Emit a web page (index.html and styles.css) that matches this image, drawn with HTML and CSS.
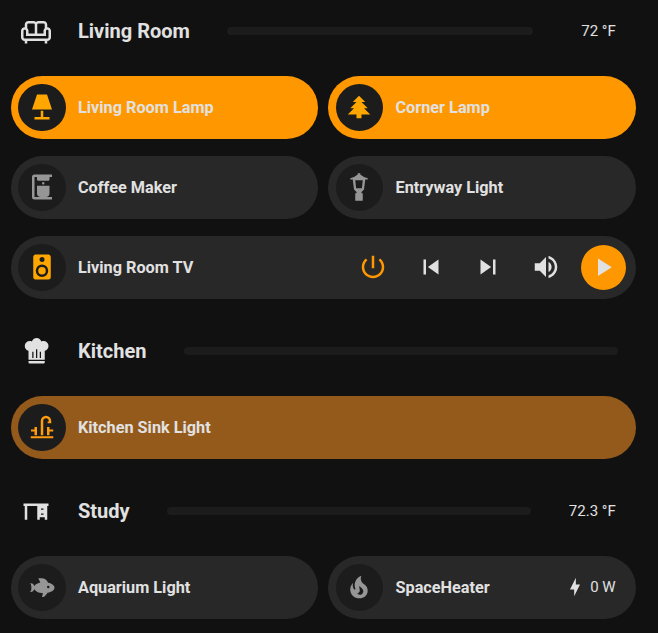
FILE: index.html
```html
<!DOCTYPE html>
<html lang="en">
<head>
<meta charset="utf-8">
<title>Home</title>
<link rel="stylesheet" href="styles.css">
</head>
<body>
<main class="dashboard">
  <header class="section">
    <span class="section-icon"><svg class="icon" viewBox="0 0 24 24"><path d="M21 9V7C21 5.35 19.65 4 18 4H14C13.23 4 12.53 4.3 12 4.78C11.47 4.3 10.77 4 10 4H6C4.35 4 3 5.35 3 7V9C1.35 9 0 10.35 0 12V17C0 18.65 1.35 20 3 20V22H5V20H19V22H21V20C22.65 20 24 18.65 24 17V12C24 10.35 22.65 9 21 9M14 6H18C18.55 6 19 6.45 19 7V9.78C18.39 10.33 18 11.12 18 12V14H13V7C13 6.45 13.45 6 14 6M5 7C5 6.45 5.45 6 6 6H10C10.55 6 11 6.45 11 7V14H6V12C6 11.12 5.61 10.33 5 9.78V7M22 17C22 17.55 21.55 18 21 18H3C2.45 18 2 17.55 2 17V12C2 11.45 2.45 11 3 11S4 11.45 4 12V16H20V12C20 11.45 20.45 11 21 11S22 11.45 22 12V17Z"/></svg></span>
    <h2 class="section-title">Living Room</h2>
    <span class="rule"></span>
    <span class="section-value">72 °F</span>
  </header>

  <div class="row">
    <div class="pill on">
      <span class="badge lit"><svg class="icon" viewBox="0 0 24 24"><path d="M8,2H16L20,14H4L8,2M11,15H13V20H18V22H6V20H11V15Z"/></svg></span>
      <span class="name">Living Room Lamp</span>
    </div>
    <div class="pill on">
      <span class="badge lit"><svg class="icon" viewBox="0 0 24 24"><path d="M10,21V18H3L8,13H5L10,8H7L12,3L17,8H14L19,13H16L21,18H14V21H10Z"/></svg></span>
      <span class="name">Corner Lamp</span>
    </div>
  </div>

  <div class="row">
    <div class="pill">
      <span class="badge"><svg class="icon" viewBox="0 0 24 24"><path d="M20 4V2H6A2 2 0 0 0 4 4V20A2 2 0 0 0 6 22H20V20H15.500A3 3 0 0 0 18 17V11H8V17A3 3 0 0 0 10.500 20H6V4H8V6A1 1 0 0 0 9 7H17A1 1 0 0 0 18 6V4M13 8A1 1 0 0 0 13 10A1 1 0 0 0 13 8Z"/></svg></span>
      <span class="name">Coffee Maker</span>
    </div>
    <div class="pill">
      <span class="badge"><svg class="icon" viewBox="0 0 24 24"><path fill-rule="evenodd" d="M11 1H13V2L16 4L19 5V6H17L16 14L14 16V17H15V23H9V17H10V16L8 14L7 6H5V5L8 4L11 2ZM9 6.500L9.700 13H14.300L15 6.500Z"/></svg></span>
      <span class="name">Entryway Light</span>
    </div>
  </div>

  <div class="row">
    <div class="pill">
      <span class="badge lit"><svg class="icon" viewBox="0 0 24 24"><path d="M12,12A3,3 0 0,0 9,15A3,3 0 0,0 12,18A3,3 0 0,0 15,15A3,3 0 0,0 12,12M12,20A5,5 0 0,1 7,15A5,5 0 0,1 12,10A5,5 0 0,1 17,15A5,5 0 0,1 12,20M12,4A2,2 0 0,1 14,6A2,2 0 0,1 12,8C10.89,8 10,7.1 10,6C10,4.89 10.89,4 12,4M17,2H7C5.89,2 5,2.89 5,4V20A2,2 0 0,0 7,22H17A2,2 0 0,0 19,20V4C19,2.89 18.1,2 17,2Z"/></svg></span>
      <span class="name">Living Room TV</span>
      <div class="controls">
        <span class="button power"><svg class="icon" viewBox="0 0 24 24"><path d="M13 3h-2v10h2V3zm4.830 2.170l-1.420 1.420C17.990 7.860 19 9.810 19 12c0 3.870-3.130 7-7 7s-7-3.130-7-7c0-2.190 1.010-4.140 2.580-5.420L6.170 5.170C4.230 6.820 3 9.260 3 12c0 4.970 4.030 9 9 9s9-4.030 9-9c0-2.740-1.230-5.180-3.170-6.830z"/></svg></span>
        <span class="button"><svg class="icon" viewBox="0 0 24 24"><path d="M6,18V6H8V18H6M9.5,12L18,6V18L9.5,12Z"/></svg></span>
        <span class="button"><svg class="icon" viewBox="0 0 24 24"><path d="M16,18H18V6H16M6,18L14.5,12L6,6V18Z"/></svg></span>
        <span class="button"><svg class="icon" viewBox="0 0 24 24"><path d="M14,3.23V5.29C16.89,6.15 19,8.83 19,12C19,15.17 16.89,17.84 14,18.7V20.77C18,19.86 21,16.28 21,12C21,7.72 18,4.14 14,3.23M16.5,12C16.5,10.23 15.5,8.71 14,7.97V16C15.5,15.29 16.5,13.76 16.5,12M3,9V15H7L12,20V4L7,9H3Z"/></svg></span>
        <span class="button play"><svg class="icon" viewBox="0 0 24 24"><path d="M8,5.14V19.14L19,12.14L8,5.14Z"/></svg></span>
      </div>
    </div>
  </div>

  <header class="section">
    <span class="section-icon"><svg class="icon" viewBox="0 0 24 24"><path d="M12.5,1.5C10.73,1.5 9.17,2.67 8.67,4.37C8.14,4.13 7.58,4 7,4A4,4 0 0,0 3,8C3,9.82 4.24,11.41 6,11.87V19H19V11.87C20.76,11.41 22,9.82 22,8A4,4 0 0,0 18,4C17.42,4 16.86,4.13 16.33,4.37C15.83,2.67 14.27,1.5 12.5,1.5M12,10.5H13V17.5H12V10.5M9,12.5H10V17.5H9V12.5M15,12.5H16V17.5H15V12.5M6,20V21A1,1 0 0,0 7,22H18A1,1 0 0,0 19,21V20H6Z"/></svg></span>
    <h2 class="section-title">Kitchen</h2>
    <span class="rule rule-full"></span>
  </header>

  <div class="row">
    <div class="pill dim">
      <span class="badge warm"><svg class="icon" viewBox="0 0 24 24"><path d="M11 18.500V7.200A4.200 4.200 0 0 1 19.400 7.200V9H16.500V7.500H17.400V7.200A2.200 2.200 0 0 0 13 7.200V18.500ZM16 18.500V12H18V14H21V15.500H18V18.500ZM6 18.500V15.500H3.200V14H6V12H8V18.500ZM3 19.300H21V21H3Z"/></svg></span>
      <span class="name">Kitchen Sink Light</span>
    </div>
  </div>

  <header class="section">
    <span class="section-icon"><svg class="icon" viewBox="0 0 24 24"><path fill-rule="evenodd" d="M3 19V8H2V6H22V8H21V19H19V17H15V19H13V8H5V19ZM16 10V11H18V10ZM16 14V15H18V14Z"/></svg></span>
    <h2 class="section-title">Study</h2>
    <span class="rule"></span>
    <span class="section-value">72.3 °F</span>
  </header>

  <div class="row">
    <div class="pill">
      <span class="badge"><svg class="icon" viewBox="0 0 24 24"><path d="M12,20L12.76,17C9.5,16.79 6.59,15.4 5.75,13.58C5.66,14.06 5.53,14.5 5.33,14.83C4.67,16 3.33,16 2,16C3.1,16 3.5,14.43 3.5,12.5C3.5,10.57 3.1,9 2,9C3.33,9 4.67,9 5.33,10.17C5.53,10.5 5.66,10.94 5.75,11.42C6.4,10 8.32,8.85 10.66,8.32L9,5C11,5 13,5 14.33,5.67C15.46,6.23 16.11,7.27 16.69,8.38C19.61,9.08 22,10.66 22,12.5C22,14.38 19.5,16 16.5,16.66C15.67,17.76 14.86,18.78 14.17,19.33C13.33,20 12.67,20 12,20M17,11A1,1 0 0,0 16,12A1,1 0 0,0 17,13A1,1 0 0,0 18,12A1,1 0 0,0 17,11Z"/></svg></span>
      <span class="name">Aquarium Light</span>
    </div>
    <div class="pill">
      <span class="badge"><svg class="icon" viewBox="0 0 24 24"><path d="M17.66 11.2C17.43 10.9 17.15 10.64 16.89 10.38C16.22 9.78 15.46 9.35 14.82 8.72C13.33 7.26 13 4.85 13.95 3C13 3.23 12.17 3.75 11.46 4.32C8.87 6.4 7.85 10.07 9.07 13.22C9.11 13.32 9.15 13.42 9.15 13.55C9.15 13.77 9 13.97 8.8 14.05C8.57 14.15 8.33 14.09 8.14 13.93C8.08 13.88 8.04 13.83 8 13.76C6.87 12.33 6.69 10.28 7.45 8.64C5.78 10 4.87 12.3 5 14.47C5.06 14.97 5.12 15.47 5.29 15.97C5.43 16.57 5.7 17.17 6 17.7C7.08 19.43 8.95 20.67 10.96 20.92C13.1 21.19 15.39 20.8 17.03 19.32C18.86 17.66 19.5 15 18.56 12.72L18.43 12.46C18.22 12 17.66 11.2 17.66 11.2M14.5 17.5C14.22 17.74 13.76 18 13.4 18.1C12.28 18.5 11.16 17.94 10.5 17.28C11.69 17 12.4 16.12 12.61 15.23C12.78 14.43 12.46 13.77 12.33 13C12.21 12.26 12.23 11.63 12.5 10.94C12.69 11.32 12.89 11.7 13.13 12C13.9 13 15.11 13.44 15.37 14.8C15.41 14.94 15.43 15.08 15.43 15.23C15.46 16.05 15.1 16.95 14.5 17.5H14.5Z"/></svg></span>
      <span class="name">SpaceHeater</span>
      <span class="reading"><svg class="icon icon-small" viewBox="0 0 24 24"><path d="M11 15H6L13 1V9H18L11 23V15Z"/></svg>0 W</span>
    </div>
  </div>
</main>
</body>
</html>
```
FILE: styles.css
```css
* { box-sizing: border-box; }

body {
  margin: 0;
  background: #111111;
  color: #e1e1e1;
  font-family: Roboto, "Liberation Sans", sans-serif;
  overflow: hidden;
}

.dashboard {
  width: 625px;
  margin-left: 10.7px;
  display: flex;
  flex-direction: column;
  gap: 17.5px;
}

.section {
  height: 62.5px;
  padding-top: 7.5px;
  display: flex;
  align-items: center;
}

/* The first header sits flush with the top of the window. */
.section:first-child { margin-top: -4px; }

.section-icon {
  width: 50px;
  display: flex;
  justify-content: center;
}

.section-title {
  margin: 0 37.5px 0 17.3px;
  font-size: 20px;
  font-weight: 700;
  line-height: 24px;
  white-space: nowrap;
}

.rule {
  flex: 1;
  height: 8px;
  border-radius: 4px;
  background: #1c1c1c;
}

.rule-full { margin-right: 17.5px; }

.section-value {
  min-width: 45px;
  margin: 0 20px 0 37.5px;
  font-size: 15px;
  text-align: right;
  white-space: nowrap;
}

.icon {
  display: block;
  flex: none;
  width: 30px;
  height: 30px;
  fill: currentColor;
}

.icon-small { width: 20px; height: 20px; }

.row {
  display: flex;
  gap: 10px;
}

.pill {
  flex: 1;
  height: 62.5px;
  padding: 0 10px 0 7.5px;
  border-radius: 32px;
  display: flex;
  align-items: center;
  background: #282828;
}

.pill.on { background: #ff9800; }
.pill.dim { background: #945a1c; }

.badge {
  width: 47.5px;
  height: 47.5px;
  border-radius: 50%;
  display: flex;
  align-items: center;
  justify-content: center;
  background: #1c1c1c;
  color: #969696;
}

.badge.lit { color: #ffa600; }
.badge.warm { color: #ff9b10; }

.name {
  margin-left: 12.3px;
  font-size: 16.25px;
  font-weight: 700;
  white-space: nowrap;
}

.controls {
  margin-left: auto;
  display: flex;
  gap: 12.5px;
}

.button {
  width: 45px;
  height: 45px;
  border-radius: 50%;
  display: flex;
  align-items: center;
  justify-content: center;
}

.button.power { color: #ff9800; }
.button.play { background: #ff9800; }

.reading {
  margin: 0 10px 0 auto;
  display: flex;
  align-items: center;
  gap: 5px;
  font-size: 15px;
}
```
